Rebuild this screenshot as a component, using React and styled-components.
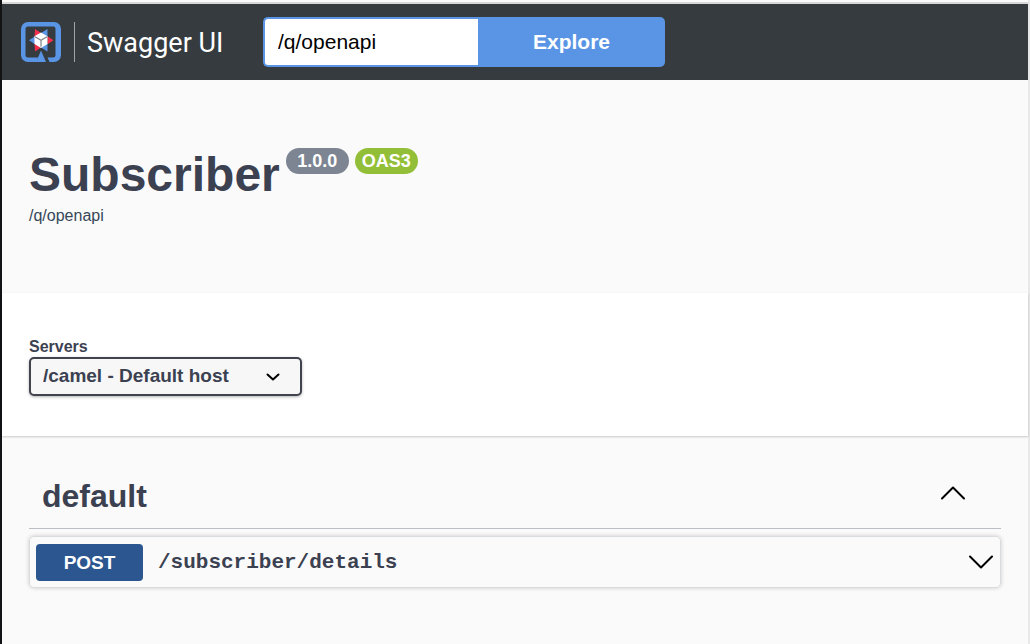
import React from 'react';
import styled, { createGlobalStyle } from 'styled-components';

const sans = '"Liberation Sans", Arial, sans-serif';

const GlobalStyle = createGlobalStyle`
  *, *::before, *::after { box-sizing: border-box; }
  body {
    margin: 0;
    background: #fafafa;
    color: #3b4151;
    font-family: ${sans};
  }
  button, input, select { font-family: inherit; }
`;

const Page = styled.div`
  min-height: 100vh;
  padding-top: 2px;
  background: #fafafa;
  border-left: 2px solid #111315;
  border-right: 2px solid #e8e8e8;
`;

const Topbar = styled.header`
  display: flex;
  align-items: center;
  height: 78px;
  padding: 0 19px;
  background: #353b3f;
  border-top: 2px solid #d8d8d8;
`;

const Brand = styled.a`
  display: flex;
  align-items: center;
  width: 242px;
  flex: none;
  color: #fff;
  text-decoration: none;
`;

const Logo = styled.svg`
  width: 40px;
  height: 40px;
`;

const BrandName = styled.span`
  height: 40px;
  margin-left: 13px;
  padding-left: 12px;
  border-left: 1px solid #a0a3a6;
  font: 400 27px/42px Roboto, sans-serif;
  white-space: nowrap;
`;

const SearchForm = styled.form`
  display: flex;
  flex: 0 1 402px;
  min-width: 0;
  height: 50px;
`;

const UrlInput = styled.input`
  flex: 1;
  min-width: 0;
  padding: 0 13px;
  border: 2px solid #5a95e5;
  border-right: 0;
  border-radius: 5px 0 0 5px;
  background: #fff;
  color: #000;
  font-size: 21px;
  outline: none;
`;

const ExploreButton = styled.button`
  flex: 0 0 187px;
  padding: 0;
  border: 0;
  border-radius: 0 5px 5px 0;
  background: #5a95e5;
  color: #fff;
  font-size: 21px;
  font-weight: 700;
`;

const Info = styled.section`
  padding: 66px 27px;
  height: 213px;
`;

const TitleRow = styled.div`
  display: flex;
  align-items: flex-start;
  gap: 6px;
`;

const Title = styled.h1`
  margin: 0;
  font-size: 48px;
  line-height: 58px;
`;

const Badge = styled.span`
  width: 63px;
  margin-top: 2px;
  border-radius: 13px;
  background: ${({ $color }) => $color};
  color: #fff;
  font-size: 18px;
  font-weight: 700;
  line-height: 26px;
  text-align: center;
`;

const SpecLink = styled.a`
  display: block;
  width: fit-content;
  margin-top: 2px;
  color: #364759;
  font-size: 16px;
  line-height: 20px;
  text-decoration: none;
`;

const Servers = styled.section`
  height: 143px;
  padding: 44px 27px;
  background: #fff;
  box-shadow: 0 1px 2px rgba(0, 0, 0, 0.2);
`;

const ServersLabel = styled.label`
  display: block;
  font-size: 16px;
  font-weight: 700;
  line-height: 20px;
`;

const SelectWrap = styled.div`
  display: grid;
  align-items: center;
  width: 273px;
  > * { grid-area: 1 / 1; }
`;

const ServerSelect = styled.select`
  width: 100%;
  height: 39px;
  padding: 0 44px 2px 12px;
  appearance: none;
  border: 2px solid #41444e;
  border-radius: 5px;
  background: #f7f7f7;
  box-shadow: 0 1px 3px rgba(0, 0, 0, 0.3);
  color: #3b4151;
  font-size: 19px;
  font-weight: 700;
`;

const Chevron = styled.svg`
  width: ${({ $w }) => $w}px;
  height: ${({ $h }) => $h}px;
  fill: none;
  stroke: #000;
  stroke-width: 2;
  stroke-linecap: round;
  stroke-linejoin: round;
`;

const SelectChevron = styled(Chevron)`
  justify-self: end;
  margin-right: 22px;
  pointer-events: none;
`;

const Operations = styled.main`
  padding: 30px 27px;
`;

const TagHeading = styled.h2`
  display: flex;
  align-items: center;
  justify-content: space-between;
  height: 63px;
  margin: 0 0 7px;
  padding: 0 36px 2px 13px;
  border-bottom: 1px solid #bcbec5;
  font-size: 32px;
  line-height: 40px;
`;

const IconButton = styled.button`
  display: flex;
  padding: 0 0 ${({ $raise }) => ($raise ? 6 : 0)}px;
  border: 0;
  background: none;
`;

const Operation = styled.article`
  display: flex;
  align-items: center;
  height: 52px;
  padding: 0 7px 0 6px;
  border: 1px solid #d9dcde;
  border-radius: 5px;
  box-shadow: 0 0 4px rgba(0, 0, 0, 0.19);
`;

const Method = styled.span`
  width: 107px;
  margin-right: 15px;
  border-radius: 4px;
  background: #2b568f;
  color: #fff;
  font-size: 19px;
  font-weight: 700;
  line-height: 37px;
  text-align: center;
`;

const Path = styled.span`
  flex: 1;
  padding-top: 2px;
  font-family: "Liberation Mono", monospace;
  font-size: 21px;
  font-weight: 700;
  line-height: 26px;
`;

function QuarkusLogo() {
  return (
    <Logo viewBox="0 0 40 40" aria-hidden="true">
      <path
        d="M16 40H7a7 7 0 0 1-7-7V7a7 7 0 0 1 7-7h26a7 7 0 0 1 7 7v26a7 7 0 0 1-7 7h-4.500l-2-4.500h5.500a2.500 2.500 0 0 0 2.500-2.500V7A2.500 2.500 0 0 0 33 4.500H7A2.500 2.500 0 0 0 4.500 7v26A2.500 2.500 0 0 0 7 35.500h10z"
        fill="#5a95e5"
      />
      <path d="M20 28.500L25 40H15z" fill="#5a95e5" />
      <path d="M14 7l6 4-6.500 4zM32.500 18.300l-6 4v-8zM14 29.500l-.5-8 6.500 4z" fill="#f5304f" />
      <path d="M26.500 7v8L20 11zM8 18.300l6-4v8zM26.500 29.500L20 25.500l6.500-4z" fill="#5a95e5" />
      <path d="M20 10.500l6.500 3.800v7.700L20 26l-6.500-4v-7.700z" fill="#fff" />
      <path d="M14 14.800l6 3.500 6-3.500M20 18.300v6.500" fill="none" stroke="#7f8488" strokeWidth="1.200" />
    </Logo>
  );
}

export default function App() {
  return (
    <>
      <GlobalStyle />
      <Page>
        <Topbar>
          <Brand href="#">
            <QuarkusLogo />
            <BrandName>Swagger UI</BrandName>
          </Brand>
          <SearchForm onSubmit={(e) => e.preventDefault()}>
            <UrlInput type="text" aria-label="Specification URL" defaultValue="/q/openapi" />
            <ExploreButton type="submit">Explore</ExploreButton>
          </SearchForm>
        </Topbar>
        <Info>
          <TitleRow>
            <Title>Subscriber</Title>
            <Badge $color="#7d8492">1.0.0</Badge>
            <Badge $color="#93bf38">OAS3</Badge>
          </TitleRow>
          <SpecLink href="#">/q/openapi</SpecLink>
        </Info>
        <Servers>
          <ServersLabel htmlFor="servers">Servers</ServersLabel>
          <SelectWrap>
            <ServerSelect id="servers">
              <option>/camel - Default host</option>
            </ServerSelect>
            <SelectChevron $w={14} $h={8} viewBox="0 0 14 8" aria-hidden="true">
              <path d="M1.500 1.500L7 6.500l5.500-5" />
            </SelectChevron>
          </SelectWrap>
        </Servers>
        <Operations>
          <TagHeading>
            default
            <IconButton type="button" aria-label="Collapse default" $raise>
              <Chevron $w={24} $h={14} viewBox="0 0 24 14">
                <path d="M1 12.500L12 1.500l11 11" />
              </Chevron>
            </IconButton>
          </TagHeading>
          <Operation>
            <Method>POST</Method>
            <Path>/subscriber/details</Path>
            <IconButton type="button" aria-label="Expand operation">
              <Chevron $w={24} $h={14} viewBox="0 0 24 14">
                <path d="M1 1.500l11 11 11-11" />
              </Chevron>
            </IconButton>
          </Operation>
        </Operations>
      </Page>
    </>
  );
}
